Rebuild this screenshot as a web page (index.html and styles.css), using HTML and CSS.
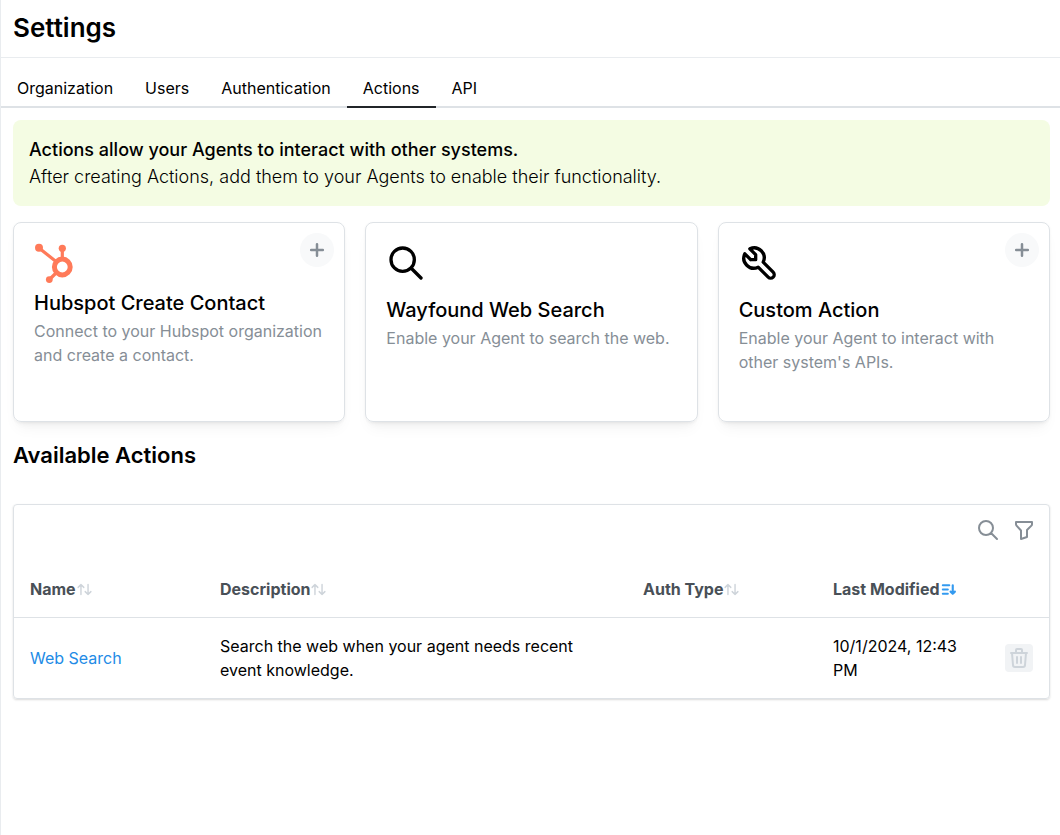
FILE: index.html
```html
<!DOCTYPE html>
<html lang="en">
<head>
<meta charset="utf-8">
<meta name="viewport" content="width=device-width, initial-scale=1">
<title>Settings</title>
<link rel="stylesheet" href="styles.css">
</head>
<body>
<svg class="sprite" aria-hidden="true">
  <symbol id="search" viewBox="0 0 24 24"><path d="M3 10a7 7 0 1 0 14 0a7 7 0 1 0 -14 0M21 21l-6 -6"/></symbol>
  <symbol id="plus" viewBox="0 0 24 24"><path d="M12 5v14M5 12h14"/></symbol>
  <symbol id="sort" viewBox="0 0 24 24"><path d="M3 9l4 -4l4 4m-4 -4v14M21 15l-4 4l-4 -4m4 4v-14"/></symbol>
</svg>
<div class="page">
  <header class="header"><h1 class="title">Settings</h1></header>
  <nav class="tabs" role="tablist">
    <button class="tab" role="tab">Organization</button>
    <button class="tab" role="tab">Users</button>
    <button class="tab" role="tab">Authentication</button>
    <button class="tab tab-active" role="tab" aria-selected="true">Actions</button>
    <button class="tab" role="tab">API</button>
  </nav>
  <main class="content">
    <section class="notice">
      <p class="notice-title">Actions allow your Agents to interact with other systems.</p>
      <p>After creating Actions, add them to your Agents to enable their functionality.</p>
    </section>
    <section class="cards">
      <article class="card">
        <svg class="card-logo" viewBox="0 0 40 40" aria-hidden="true">
          <path d="M5 5L22 18.500M28.300 5.500V16M15.500 36.500L22 30" fill="none" stroke="#ff7a59" stroke-width="3.200"/>
          <circle cx="28.300" cy="24" r="7.900" fill="none" stroke="#ff7a59" stroke-width="5"/>
          <circle cx="5" cy="4.700" r="4" fill="#ff7a59"/>
          <circle cx="28.300" cy="5.300" r="3.600" fill="#ff7a59"/>
          <circle cx="15.300" cy="36.600" r="3.400" fill="#ff7a59"/>
        </svg>
        <h2 class="card-title">Hubspot Create Contact</h2>
        <p class="card-text">Connect to your Hubspot organization and create a contact.</p>
        <button class="add" aria-label="Add Hubspot Create Contact"><svg class="icon icon-plus"><use href="#plus"/></svg></button>
      </article>
      <article class="card">
        <svg class="icon card-icon" aria-hidden="true"><use href="#search"/></svg>
        <h2 class="card-title">Wayfound Web Search</h2>
        <p class="card-text">Enable your Agent to search the web.</p>
      </article>
      <article class="card">
        <svg class="icon card-icon" viewBox="0 0 24 24" aria-hidden="true"><path d="M7 10h3v-3l-3.500 -3.500a6 6 0 0 1 8 8l6 6a2 2 0 0 1 -3 3l-6 -6a6 6 0 0 1 -8 -8l3.500 3.500"/></svg>
        <h2 class="card-title">Custom Action</h2>
        <p class="card-text">Enable your Agent to interact with other system's APIs.</p>
        <button class="add" aria-label="Add Custom Action"><svg class="icon icon-plus"><use href="#plus"/></svg></button>
      </article>
    </section>
    <h2 class="section-title">Available Actions</h2>
    <section class="panel">
      <div class="toolbar">
        <button class="tool" aria-label="Search"><svg class="icon icon-tool"><use href="#search"/></svg></button>
        <button class="tool" aria-label="Filter"><svg class="icon icon-tool" viewBox="0 0 24 24"><path d="M4 4h16v2.172a2 2 0 0 1 -.586 1.414l-4.414 4.414v7l-6 2v-8.500l-4.480 -4.928a2 2 0 0 1 -.520 -1.345v-2.227z"/></svg></button>
      </div>
      <table class="table">
        <colgroup><col class="col-name"><col><col class="col-auth"><col class="col-date"><col class="col-action"></colgroup>
        <thead>
          <tr>
            <th><span class="head">Name<svg class="icon icon-sort"><use href="#sort"/></svg></span></th>
            <th><span class="head">Description<svg class="icon icon-sort"><use href="#sort"/></svg></span></th>
            <th><span class="head">Auth Type<svg class="icon icon-sort"><use href="#sort"/></svg></span></th>
            <th aria-sort="descending"><span class="head">Last Modified<svg class="icon icon-sort icon-sorted" viewBox="0 0 24 24"><path d="M4 6h9M4 12h7M4 18h7M15 15l3 3l3 -3M18 6v12"/></svg></span></th>
            <th></th>
          </tr>
        </thead>
        <tbody>
          <tr>
            <td><a class="link" href="#">Web Search</a></td>
            <td>Search the web when your agent needs recent event knowledge.</td>
            <td></td>
            <td>10/1/2024, 12:43 PM</td>
            <td class="cell-action"><button class="delete" aria-label="Delete Web Search" disabled><svg class="icon icon-tool" viewBox="0 0 24 24"><path d="M4 7h16M10 11v6M14 11v6M5 7l1 12a2 2 0 0 0 2 2h8a2 2 0 0 0 2 -2l1 -12M9 7v-3a1 1 0 0 1 1 -1h4a1 1 0 0 1 1 1v3"/></svg></button></td>
          </tr>
        </tbody>
      </table>
    </section>
  </main>
</div>
</body>
</html>
```

FILE: styles.css
```css
* { box-sizing: border-box; }

body {
  margin: 0;
  background: #fff;
  color: #000;
  font: 16px/24px Inter, "Liberation Sans", sans-serif;
}

h1, h2, p { margin: 0; }

button {
  border: 0;
  padding: 0;
  background: none;
  color: inherit;
  font: inherit;
}

.sprite { display: none; }

.icon {
  display: block;
  flex: none;
  fill: none;
  stroke: currentColor;
  stroke-width: 2;
  stroke-linecap: round;
  stroke-linejoin: round;
}

.page { min-height: 100vh; border-left: 1px solid #e9ecef; }

.header { padding: 10px 12px 11px; border-bottom: 1px solid #e9ecef; }
.title { font-size: 26px; line-height: 36px; font-weight: 600; }

.tabs {
  display: flex;
  margin-top: 10px;
  box-shadow: inset 0 -2px #dee2e6;
}
.tab { padding: 8px 16px 6px; border-bottom: 2px solid transparent; }
.tab-active { border-color: #212529; }

.content { padding: 12px 10px 12px 12px; }

.notice {
  padding: 16px;
  border-radius: 8px;
  background: #f4fce3;
  font-size: 18px;
  line-height: 27px;
  font-weight: 300;
}
.notice-title { font-weight: 500; }

.cards {
  display: grid;
  grid-template-columns: repeat(3, 1fr);
  gap: 20px;
  margin-top: 16px;
}
.card {
  position: relative;
  min-height: 200px;
  padding: 20px;
  border: 1px solid #dee2e6;
  border-radius: 8px;
  box-shadow: 0 1px 3px rgba(0, 0, 0, .05), 0 10px 15px -5px rgba(0, 0, 0, .05), 0 7px 7px -5px rgba(0, 0, 0, .04);
}
.card-logo { display: block; width: 40px; height: 40px; margin-bottom: 5px; overflow: visible; }
.card-icon { width: 40px; height: 40px; margin-bottom: 12px; }
.card-title { font-size: 20px; line-height: 31px; font-weight: 500; }
.card-text { color: #868e96; }

.add {
  position: absolute;
  top: 10px;
  right: 10px;
  display: grid;
  place-items: center;
  width: 34px;
  height: 34px;
  border-radius: 50%;
  background: #f8f9fa;
  color: #868e96;
}
.icon-plus { width: 20px; height: 20px; stroke-width: 3; }

.section-title { margin: 18px 0 34px; font-size: 22px; line-height: 30px; font-weight: 600; }

.panel {
  border: 1px solid #dee2e6;
  border-radius: 4px;
  box-shadow: 0 1px 3px rgba(0, 0, 0, .05), 0 1px 2px rgba(0, 0, 0, .1);
}
.toolbar { display: flex; justify-content: flex-end; gap: 2px; padding: 8px 8px 14px; }
.tool { display: grid; place-items: center; width: 34px; height: 34px; color: #868e96; }
.icon-tool { width: 24px; height: 24px; }

.table { width: 100%; border-collapse: separate; border-spacing: 0; table-layout: fixed; }
.col-name, .col-auth { width: 190px; }
.col-date { width: 172px; }
.col-action { width: 60px; }
.table th { padding: 16px; border-bottom: 1px solid #dee2e6; color: #495057; font-weight: 700; text-align: left; }
.table td { padding: 16px; }
.table .cell-action { padding: 0 16px; }
.head { display: flex; align-items: center; white-space: nowrap; }
.icon-sort { width: 17px; height: 17px; color: #ced4da; }
.icon-sorted { color: #339af0; stroke-width: 3; }
.link { color: #228be6; text-decoration: none; }
.delete {
  display: grid;
  place-items: center;
  width: 28px;
  height: 28px;
  border-radius: 4px;
  background: #f1f3f5;
  color: #ced4da;
}
```
